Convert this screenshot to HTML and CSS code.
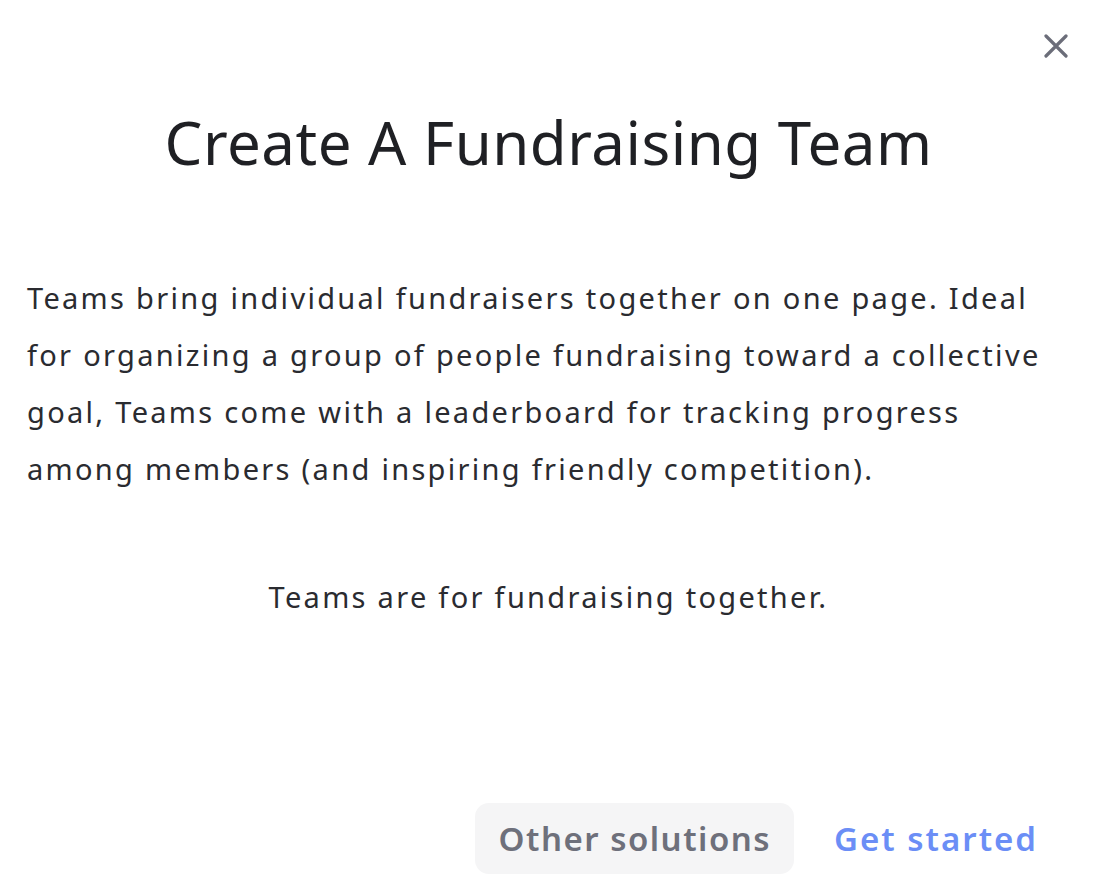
FILE: index.html
```html
<!DOCTYPE html>
<html lang="en">
<head>
    <meta charset="UTF-8">
    <meta name="viewport" content="width=device-width, initial-scale=1.0">
    <title>Create A Fundraising Team</title>
    <link rel="stylesheet" href="styles.css">
</head>
<body>
    <div class="modal">
        <button class="close" aria-label="Close">
            <svg width="24" height="24" viewBox="0 0 24 24">
                <path d="M2 2 L22 22 M22 2 L2 22" stroke="#6b6d79" stroke-width="3.2" stroke-linecap="round" fill="none"/>
            </svg>
        </button>
        <h1 class="title">Create A Fundraising Team</h1>
        <p class="intro">Teams bring individual fundraisers together on one page. Ideal for organizing a group of people fundraising toward a collective goal, Teams come with a leaderboard for tracking progress among members (and inspiring friendly competition).</p>
        <p class="tagline">Teams are for fundraising together.</p>
        <div class="actions">
            <button class="btn btn-secondary">Other solutions</button>
            <button class="btn btn-link">Get started</button>
        </div>
    </div>
</body>
</html>
```

FILE: styles.css
```css
body {
    margin: 0;
    padding: 0;
    background-color: #ffffff;
    font-family: "Noto Sans", Arial, sans-serif;
    color: #25262b;
}
.modal {
    position: relative;
    width: 1094px;
    height: 878px;
    box-sizing: border-box;
    padding: 0 24px 0 27px;
    display: flex;
    flex-direction: column;
}
.close {
    position: absolute;
    top: 34px;
    right: 26px;
    background: none;
    border: none;
    padding: 0;
    cursor: pointer;
}
.title {
    margin: 102px 0 0;
    font-size: 60px;
    font-weight: 400;
    letter-spacing: 0.5px;
    text-align: center;
    line-height: 80px;
    color: #1f2024;
}
.intro {
    margin: 87px 0 0;
    font-size: 29px;
    letter-spacing: 2.3px;
    line-height: 57px;
    color: #2a2b30;
}
.tagline {
    margin: 71px 0 0;
    font-size: 29px;
    letter-spacing: 2.3px;
    line-height: 57px;
    text-align: center;
    color: #2a2b30;
}
.actions {
    margin-top: auto;
    margin-bottom: 4px;
    padding-right: 32px;
    display: flex;
    justify-content: flex-end;
    align-items: center;
    gap: 40px;
}
.btn {
    font-family: inherit;
    font-size: 33px;
    font-weight: 600;
    letter-spacing: 1.5px;
    border: none;
    cursor: pointer;
    height: 71px;
    border-radius: 14px;
    padding: 0 23px 0 24px;
}
.btn-secondary {
    background-color: #f5f5f6;
    color: #6e707b;
}
.btn-link {
    background: none;
    color: #6b8ef6;
    letter-spacing: 2px;
    padding: 0;
}
```
